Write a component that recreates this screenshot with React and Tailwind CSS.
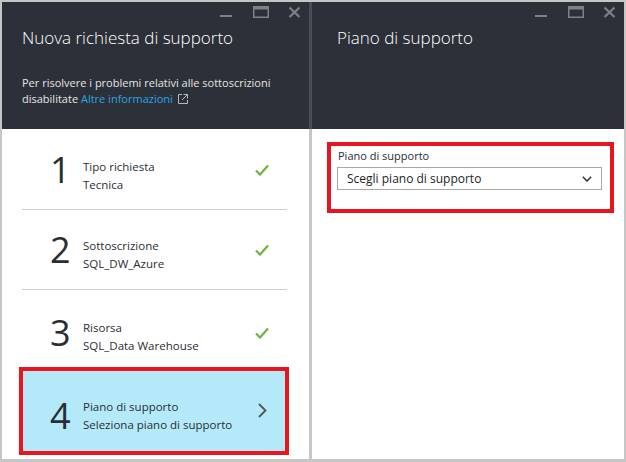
const font = { fontFamily: '"Open Sans", "Noto Sans", sans-serif' }

const steps = [
  { n: '1', title: 'Tipo richiesta', value: 'Tecnica', labelGap: 'mt-[12px]', row: 'h-[81px] pt-[2px] border-b' },
  { n: '2', title: 'Sottoscrizione', value: 'SQL_DW_Azure', labelGap: 'mt-[11px]', row: 'h-[80px] border-b' },
  { n: '3', title: 'Risorsa', value: 'SQL_Data Warehouse', labelGap: 'mt-[8px]', row: 'h-[77px] pt-[8px]' },
]

// minimize / maximize / close glyphs of the blade chrome
const WindowControls = () => (
  <svg width="82" height="20" viewBox="0 0 82 20" className="ml-auto block shrink-0">
    <rect x="1" y="13" width="12" height="2" fill="#7e8187" />
    <rect x="34.75" y="4.75" width="14.5" height="10.5" fill="none" stroke="#7e8187" strokeWidth="1.5" />
    <rect x="34" y="4" width="16" height="3.5" fill="#7e8187" />
    <path d="M70.5 5.5 L80.5 15 M80.5 5.5 L70.5 15" stroke="#7e8187" strokeWidth="2.2" />
  </svg>
)

const Check = () => (
  <svg width="14" height="12" viewBox="0 0 14 12" className="shrink-0">
    <path d="M1 6.5 L5 10.5 L13 1.5" fill="none" stroke="#6db33f" strokeWidth="2.2" />
  </svg>
)

const StepRow = ({ step }) => (
  <div className={`flex items-center pl-[28px] border-[#cfcfcf] ${step.row}`}>
    <div className="w-[33px] shrink-0 text-[36px] leading-[36px] text-[#2a2d33]">{step.n}</div>
    <div className={`flex-1 text-[11.5px] leading-[18px] text-[#2a2d33] ${step.labelGap}`}>
      <div>{step.title}</div>
      <div>{step.value}</div>
    </div>
    <div className="mr-[18px]">
      <Check />
    </div>
  </div>
)

export default function App() {
  return (
    <div className="w-[626px] h-[462px] bg-[#c6c6c6] pt-[2px] pl-[2px] pr-[2px] pb-[3px] flex" style={font}>
      {/* left blade: wizard steps */}
      <div className="w-[310px] h-full flex flex-col shrink-0">
        <div className="h-[127px] bg-[#2c3038] border-r-[3px] border-[#494d55] pl-[20px] pr-[8px] flex flex-col">
          <WindowControls />
          <h1 className="mt-[4px] text-[17px] leading-[24px] font-light text-white">Nuova richiesta di supporto</h1>
          <p className="mt-[25px] text-[11px] leading-[16px] text-[#e6e6e6]">
            Per risolvere i problemi relativi alle sottoscrizioni
            <br />
            disabilitate{' '}
            <span className="text-[#2aa6e0]">Altre informazioni</span>
            <svg width="10" height="10" viewBox="0 0 10 10" className="inline-block ml-[5px] -mt-[2px] align-middle">
              <path d="M4 0.5 H0.5 V9.5 H9.5 V6" fill="none" stroke="#b8b8b8" />
              <path d="M5.5 0.5 H9.5 V4.5 M9.5 0.5 L4 6" fill="none" stroke="#b8b8b8" />
            </svg>
          </p>
        </div>
        <div className="flex-1 bg-white border-r-[3px] border-[#c6c6c6] flex flex-col">
          <div className="ml-[20px] mr-[22px]">
            {steps.map((s) => (
              <StepRow key={s.n} step={s} />
            ))}
          </div>
          <div className="ml-[17px] mr-[20px] h-[88px] border-4 border-[#e8151f] bg-[#b3e9f8] flex items-center pl-[27px] pt-[10px]">
            <div className="w-[33px] shrink-0 text-[36px] leading-[36px] text-[#2a2d33]">4</div>
            <div className="flex-1 text-[11.5px] leading-[18px] text-[#2a2d33]">
              <div>Piano di supporto</div>
              <div>Seleziona piano di supporto</div>
            </div>
            <svg width="9" height="15" viewBox="0 0 9 15" className="mr-[18px] -mt-[12px] shrink-0">
              <path d="M1 1 L7.5 7.5 L1 14" fill="none" stroke="#50555c" strokeWidth="1.8" />
            </svg>
          </div>
        </div>
      </div>

      {/* right blade: support plan */}
      <div className="flex-1 h-full flex flex-col">
        <div className="h-[127px] bg-[#2c3038] pl-[25px] pr-[8px] flex flex-col">
          <WindowControls />
          <h2 className="mt-[4px] text-[17px] leading-[24px] font-light text-white">Piano di supporto</h2>
        </div>
        <div className="flex-1 bg-white">
          <div className="mt-[13px] ml-[15px] mr-[10px] h-[71px] border-4 border-[#e8151f] pl-[6px] pr-[8px] pt-[2px]">
            <label className="block pl-[1px] text-[11px] leading-[16px] text-[#2a2d33]">Piano di supporto</label>
            <div className="mt-[3px] h-[23px] border border-[#a8a8a8] flex items-center pl-[9px] pr-[9px]">
              <span className="flex-1 text-[12px] text-[#1e1e1e]">Scegli piano di supporto</span>
              <svg width="10" height="6" viewBox="0 0 10 6">
                <path d="M0.8 0.8 L5 5 L9.2 0.8" fill="none" stroke="#333" strokeWidth="1.5" />
              </svg>
            </div>
          </div>
        </div>
      </div>
    </div>
  )
}
